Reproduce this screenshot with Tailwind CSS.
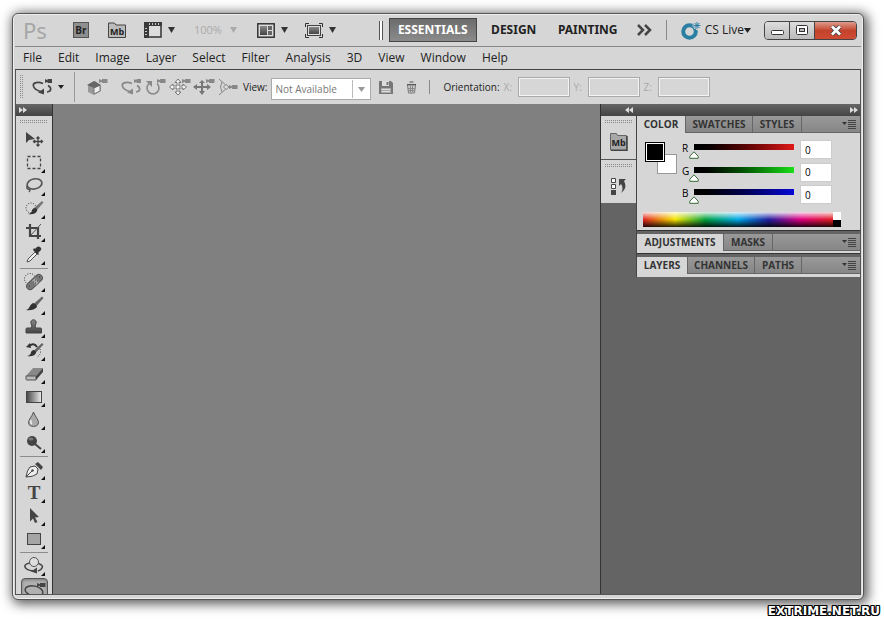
<!DOCTYPE html>
<html lang="en">
<head>
    <meta charset="UTF-8">
    <meta name="viewport" content="width=device-width, initial-scale=1.0">
    <title>Photoshop</title>
    <script src="https://cdn.jsdelivr.net/npm/@tailwindcss/browser@4"></script>
    <style>
        body {
            font-family: 'Open Sans', 'Noto Sans', sans-serif;
        }

        .grip {
            background-image: conic-gradient(at 1px 1px, transparent 75%, #8a8a8a 0);
            background-size: 2px 2px;
        }

        .channel {
            appearance: none;
            background-repeat: no-repeat;
            background-size: 100px 6px;
            background-position: 5px 0;
        }

        .channel::-webkit-slider-thumb {
            appearance: none;
            width: 10px;
            height: 8px;
            margin-top: 6px;
            background: url("data:image/svg+xml,%3Csvg xmlns='http://www.w3.org/2000/svg' width='10' height='8'%3E%3Cpath d='M5 .8L9.2 5.2V7.3H.8V5.2z' fill='%23fff' stroke='%23386b38'/%3E%3C/svg%3E");
        }

        .outlined {
            text-shadow: 1px 0 #000, -1px 0 #000, 0 1px #000, 0 -1px #000, 1px 1px #000, -1px -1px #000, 1px -1px #000, -1px 1px #000;
        }
    </style>
</head>
<body class="h-screen flex flex-col overflow-hidden bg-white pl-3 pr-5 pt-[13px]">
    <!-- Shared shapes -->
    <svg class="absolute size-0">
        <defs>
            <linearGradient id="shade" x1="0" y1="0" x2="0" y2="1"><stop stop-color="#888"/><stop offset="1" stop-color="#444"/></linearGradient>
            <linearGradient id="fade"><stop stop-color="#444"/><stop offset="1" stop-color="#eee"/></linearGradient>
            <symbol id="corner" viewBox="0 0 36 23"><path d="M29 18v4h-4z" fill="#111"/></symbol>
            <symbol id="cam" viewBox="0 0 9 6"><path d="M0 1l3 1.300V1h5.500v4H3V3.700L0 5z" fill="currentColor"/></symbol>
            <symbol id="orbit" viewBox="0 0 22 18">
                <path d="M11 5.500C6 3.500 1 4.500 1.300 7.500c.4 3 4 5.200 8.200 6.300M16 7.500c3.500 2 4 6-1 6.500" fill="none" stroke="currentColor" stroke-width="1.700"/>
                <path d="M12 10.500v6L6 14.500z" fill="currentColor"/>
                <path d="M13 1l2.500 1.200V1H20v4h-4.500V3.800L13 5z" fill="currentColor"/>
            </symbol>
            <symbol id="down" viewBox="0 0 7 6"><path d="M0 0h7L3.500 6z" fill="currentColor"/></symbol>
            <symbol id="panelmenu" viewBox="0 0 14 9"><path d="M0 2h5L2.500 5z" fill="#333"/><path d="M6 .5h8M6 2.500h8M6 4.500h8M6 6.500h8M6 8.500h8" stroke="#444"/></symbol>
            <symbol id="chev" viewBox="0 0 8 6"><path d="M0 0l4 3-4 3zM4 0l4 3-4 3z" fill="#ddd"/></symbol>
        </defs>
    </svg>

    <div class="flex-1 min-h-0 flex flex-col rounded-md border border-[#555] bg-[#d6d6d6] px-[2px] pb-1 shadow-[2px_2px_12px_2px_rgba(0,0,0,0.65),inset_0_0_0_1px_#eee]">
        <!-- Application bar -->
        <header class="h-[33px] shrink-0 flex items-center border-b border-[#8a8a8a] pl-2 pr-1 text-[#333]">
            <h1 class="w-[50px] text-[22px] leading-8 text-[#a6a6a6] font-['Noto_Sans']">Ps</h1>
            <button class="w-[35px]" aria-label="Launch Bridge">
                <svg width="16" height="16"><rect x=".5" y=".5" width="15" height="15" fill="#8e8e8e" stroke="#555"/><text x="8" y="12" font-size="10" font-weight="700" text-anchor="middle" fill="#222">Br</text></svg>
            </button>
            <button class="w-9" aria-label="Launch Mini Bridge">
                <svg width="18" height="16"><path d="M.5 15.500V1h6l1.500 2h9.500v12.500z" fill="#bbb" stroke="#444"/><text x="9" y="13" font-size="9" font-weight="700" text-anchor="middle" fill="#222">Mb</text></svg>
            </button>
            <button class="w-[50px] flex items-center gap-[6px]" aria-label="View extras">
                <svg width="18" height="16"><path d="M1 1h16v14H1z" fill="#ddd" stroke="#333" stroke-width="1.500"/><path d="M0 0h18v4H5v12H0z" fill="#3a3a3a"/><path d="M5.500 1v2M8.500 1v2M11.500 1v2M14.500 1v2M1 6.500h2M1 9.500h2M1 12.500h2" stroke="#ccc"/></svg>
                <svg width="7" height="6"><use href="#down"/></svg>
            </button>
            <button class="w-[63px] flex items-center gap-2 text-[11px] text-[#aaa]" aria-label="Zoom level">100% <svg width="7" height="6"><use href="#down"/></svg></button>
            <button class="w-12 flex items-center gap-[6px]" aria-label="Arrange documents">
                <svg width="18" height="15"><rect x=".8" y=".8" width="16.400" height="13.400" fill="#ddd" stroke="#333" stroke-width="1.500"/><path d="M3 3h7v9H3z" fill="url(#shade)"/><path d="M11 3h4v4h-4zM11 8h4v4h-4z" fill="#666"/></svg>
                <svg width="7" height="6"><use href="#down"/></svg>
            </button>
            <button class="flex items-center gap-[6px]" aria-label="Screen mode">
                <svg width="18" height="15"><path d="M.5 4V.5H4M14 .5h3.500V4M17.500 11v3.500H14M4 14.500H.5V11" fill="none" stroke="#333"/><rect x="2.500" y="2.500" width="13" height="10" fill="#ddd" stroke="#444"/><rect x="4" y="4" width="10" height="7" fill="url(#shade)"/></svg>
                <svg width="7" height="6"><use href="#down"/></svg>
            </button>
            <nav class="ml-auto flex items-center text-xs font-bold text-[#222] font-['Noto_Sans']">
                <span class="h-[19px] w-1 mr-[6px] border-x border-[#555] bg-white"></span>
                <button class="h-6 w-[88px] border border-[#444] bg-linear-to-b from-[#6c6c6c] to-[#8b8b8b] text-white">ESSENTIALS</button>
                <button class="w-[74px]">DESIGN</button>
                <button class="w-[74px]">PAINTING</button>
                <button class="ml-3" aria-label="More workspaces"><svg width="15" height="12"><path d="M1 1l5 5-5 5M8 1l5 5-5 5" fill="none" stroke="#444" stroke-width="2.500"/></svg></button>
            </nav>
            <button class="ml-[14px] flex h-5 items-center border-l border-[#888] pl-[14px] text-xs text-[#222]">
                <svg class="mr-1" width="20" height="19"><circle cx="8.500" cy="10.500" r="6.300" fill="none" stroke="#2a7fa3" stroke-width="4"/><path d="M16 0v9M11.500 4.500h9M13 1.500l6 6M19 1.500l-6 6" stroke="#d6d6d6" stroke-width="2"/><path d="M16 1v7M12.500 4.500h7M13.500 2l5 5M18.500 2l-5 5" stroke="#2a7fa3"/></svg>
                CS Live
                <svg width="7" height="5" viewBox="0 0 7 6" preserveAspectRatio="none"><use href="#down"/></svg>
            </button>
            <div class="ml-[13px] flex h-[19px] w-[93px] overflow-hidden rounded-sm border border-[#444]">
                <button class="flex w-[25px] items-end justify-center border-r border-[#444] bg-linear-to-b from-[#ddd] via-[#ccc] to-[#bbb] pb-1" aria-label="Minimize"><svg width="13" height="5"><rect x=".5" y=".5" width="12" height="4" rx="1" fill="#fff" stroke="#333"/></svg></button>
                <button class="flex w-[25px] items-center justify-center border-r border-[#444] bg-linear-to-b from-[#ddd] via-[#ccc] to-[#bbb]" aria-label="Maximize"><svg width="12" height="10"><rect x=".5" y=".5" width="11" height="9" rx="1" fill="#fff" stroke="#333"/><rect x="3.500" y="3.500" width="5" height="3" fill="#bbb" stroke="#333"/></svg></button>
                <button class="flex flex-1 items-center justify-center bg-linear-to-b from-[#dc9a8c] via-[#c4432d] to-[#cf4a33]" aria-label="Close"><svg width="12" height="11"><path d="M2 1.500l8 8M10 1.500l-8 8" stroke="#444" stroke-width="4.500"/><path d="M2 1.500l8 8M10 1.500l-8 8" stroke="#fff" stroke-width="2.800"/></svg></button>
            </div>
        </header>

        <!-- Menu bar -->
        <nav class="h-[23px] shrink-0 flex items-center gap-4 border-b border-[#444] pl-2 text-xs text-[#222]">
            <button>File</button>
            <button>Edit</button>
            <button>Image</button>
            <button>Layer</button>
            <button>Select</button>
            <button>Filter</button>
            <button>Analysis</button>
            <button>3D</button>
            <button>View</button>
            <button>Window</button>
            <button>Help</button>
        </nav>

        <!-- Options bar -->
        <div class="h-[34px] shrink-0 flex items-center border-x border-[#555] pl-1 text-[10px] text-[#222]">
            <span class="grip h-6 w-1"></span>
            <button class="ml-2 flex items-center gap-1" aria-label="Current tool">
                <svg class="text-[#444]" width="22" height="18"><use href="#orbit"/></svg>
                <svg width="6" height="4" viewBox="0 0 7 6" preserveAspectRatio="none"><use href="#down"/></svg>
            </button>
            <span class="ml-[10px] h-[30px] w-px bg-[#999]"></span>
            <div class="ml-3 flex items-center gap-[2px] text-[#888]">
                <button class="w-8" aria-label="Initial position"><svg width="22" height="18"><path d="M1 7l7-4 6 5v5l-7 4-6-3z" fill="#999"/><path d="M7 10l6-3v6l-6 3z" fill="#eee" stroke="#777"/><path d="M0 7l7-4 7 4-2 1-5 2z" fill="#666"/><use href="#cam" x="12" y="0" width="9" height="6"/></svg></button>
                <button aria-label="Orbit"><svg width="22" height="18"><use href="#orbit"/></svg></button>
                <button aria-label="Roll"><svg width="22" height="18"><path d="M4 5.500a6 6 0 1 0 8 0" fill="none" stroke="#888" stroke-width="1.600"/><path d="M1 3h6v6z" fill="#888"/><use href="#cam" x="12" y="0" width="9" height="6"/></svg></button>
                <button aria-label="Pan"><svg width="22" height="18"><path d="M9 1l3 3.500h-2V8h4V6l3.500 3L14 12v-2h-4v4h2l-3 3-3-3h2v-4H4v2L.5 9 4 6v2h4V4.500H6z" fill="#f4f4f4" stroke="#777"/><use href="#cam" x="13" y="0" width="9" height="6"/></svg></button>
                <button aria-label="Walk"><svg width="22" height="18"><path d="M9 2l3 3h-2v3h4V6l4 3-4 3v-2h-4v3h2l-3 4-3-4h2v-3H4v2L0 9l4-3v2h4V5H6z" fill="#777"/><use href="#cam" x="13" y="0" width="9" height="6"/></svg></button>
                <button aria-label="Zoom"><svg width="22" height="18"><path d="M2 1l9 8-9 8M5 4q-3 5 0 10" fill="none" stroke="#888"/><path d="M9 6.500l3 2.500-3 2.500L6.500 9z" fill="#ddd" stroke="#888"/><use href="#cam" x="12" y="6" width="9" height="6"/></svg></button>
            </div>
            <label for="view" class="ml-1">View:</label>
            <div class="relative ml-1 mt-1">
                <select id="view" class="h-[22px] w-[100px] appearance-none border border-[#aaa] bg-white pl-[3px] text-[10px] text-[#777]">
                    <option>Not Available</option>
                </select>
                <span class="pointer-events-none absolute right-[2px] top-[2px] flex h-[18px] w-[17px] items-center justify-center border-l border-[#bbb] bg-white text-[#999]"><svg width="7" height="5" viewBox="0 0 7 6" preserveAspectRatio="none"><use href="#down"/></svg></span>
            </div>
            <button class="ml-2" aria-label="Save view"><svg width="14" height="14"><path d="M0 1h12l2 2v11H0z" fill="#777"/><path d="M3 1h7v5H3z" fill="#ddd"/><path d="M7.500 2h2v3h-2z" fill="#777"/><path d="M2 8h10v5H2z" fill="#aaa"/><path d="M3 9.500h8M3 11.500h8" stroke="#ddd"/></svg></button>
            <button class="ml-3" aria-label="Delete view"><svg width="13" height="14"><path d="M2.500 5h8l-1 8h-6z" fill="#ccc" stroke="#777"/><path d="M2 4.500h9M4.500 2h4" stroke="#555" stroke-width="1.200"/><path d="M5.500 6v6M7.500 6v6M3 8.500h7M3.500 10.500h6" stroke="#888"/></svg></button>
            <span class="ml-[11px] h-[14px] w-px bg-[#888]"></span>
            <span class="ml-[13px] mr-1">Orientation:</span>
            <label for="rot-x" class="w-[14px] text-[#aaa]">X:</label>
            <input id="rot-x" class="mr-1 h-5 w-[52px] border border-[#aaa] shadow-[inset_0_0_0_1px_#f4f4f4]" disabled>
            <label for="rot-y" class="w-[14px] text-[#aaa]">Y:</label>
            <input id="rot-y" class="mr-1 h-5 w-[52px] border border-[#aaa] shadow-[inset_0_0_0_1px_#f4f4f4]" disabled>
            <label for="rot-z" class="w-[14px] text-[#aaa]">Z:</label>
            <input id="rot-z" class="h-5 w-[52px] border border-[#aaa] shadow-[inset_0_0_0_1px_#f4f4f4]" disabled>
        </div>

        <!-- Workspace -->
        <div class="flex-1 min-h-0 flex overflow-hidden border-x border-b border-[#555] bg-[#808080]">
            <!-- Tools -->
            <aside class="w-9 shrink-0 flex flex-col border-r border-[#333] bg-[#d6d6d6] text-[#444] box-content">
                <div class="h-3 shrink-0 bg-linear-to-b from-[#666] to-[#444] pl-[3px] pt-[3px]"><svg width="8" height="6"><use href="#chev"/></svg></div>
                <div class="grip mx-auto mt-1 mb-1 h-1 w-7 shrink-0"></div>
                <button class="h-[23px] shrink-0" aria-label="Move tool"><svg width="36" height="23"><path d="M10 4l9 7-6 1-3 3z" fill="#444"/><path d="M22 9v9M17.500 13.500h9M20.500 10.500L22 9l1.500 1.500M20.500 16.500L22 18l1.500-1.500M19 12l-1.500 1.500L19 15M25 12l1.500 1.500L25 15" fill="none" stroke="#444" stroke-width="1.300"/></svg></button>
                <button class="h-[23px] shrink-0" aria-label="Marquee tool"><svg width="36" height="23"><rect x="11.500" y="5.500" width="13" height="12" fill="none" stroke="#444" stroke-width="1.300" stroke-dasharray="3 2"/><use href="#corner"/></svg></button>
                <button class="h-[23px] shrink-0" aria-label="Lasso tool"><svg width="36" height="23"><ellipse cx="18.500" cy="10" rx="7.500" ry="5" fill="none" stroke="#555" stroke-width="1.700" transform="rotate(-12 18 10)"/><path d="M11 12q-1 4 3 3M13 14q2 2 0 4" fill="none" stroke="#555" stroke-width="1.400"/><use href="#corner"/></svg></button>
                <button class="h-[23px] shrink-0" aria-label="Quick selection tool"><svg width="36" height="23"><circle cx="15" cy="11" r="5" fill="none" stroke="#333" stroke-dasharray="1 1.500"/><path d="M26 4l1.500 1.500-6.500 7.500-3-2z" fill="#777"/><path d="M19 11q3 1 2 3-2 4-9 3 4-1 4-4 1-2 3-2z" fill="#333"/><use href="#corner"/></svg></button>
                <button class="h-[23px] shrink-0" aria-label="Crop tool"><svg width="36" height="23"><path d="M14 4v12h11M10 8h12v11" fill="none" stroke="#444" stroke-width="2.200"/><path d="M15 15L25 4" stroke="#555"/><use href="#corner"/></svg></button>
                <button class="h-[23px] shrink-0" aria-label="Eyedropper tool"><svg width="36" height="23"><path d="M11 19l1-3 7-7 2 2-7 7z" fill="#eee" stroke="#555"/><path d="M17 7l5 5 1-1-1-1 3-3q1-2-1-3t-3 0l-2 2-1-1z" fill="#333"/><use href="#corner"/></svg></button>
                <hr class="mx-1 mt-[2px] mb-px h-px shrink-0 border-0 bg-[#8c8c8c]">
                <button class="h-[23px] shrink-0" aria-label="Healing brush tool"><svg width="36" height="23"><circle cx="14" cy="9" r="5.500" fill="none" stroke="#333" stroke-dasharray="1 1.500"/><rect x="9" y="8.500" width="19" height="7" rx="3.500" fill="#777" stroke="#555" transform="rotate(-43 18.500 12)"/><path d="M16 11l3-3 4 4-3 3z" fill="#aaa"/><path d="M17 12h1M19 10h1M19 13h1M21 11h1M13 16h1M23 7h1" stroke="#333"/><use href="#corner"/></svg></button>
                <button class="h-[23px] shrink-0" aria-label="Brush tool"><svg width="36" height="23"><path d="M26 3.500l1.500 1.500-7 8-3-2z" fill="#666"/><path d="M17 10q4 1 4 4-4 4-11 3 3-1 4-4 1-2 3-3z" fill="#333"/><use href="#corner"/></svg></button>
                <button class="h-[23px] shrink-0" aria-label="Clone stamp tool"><svg width="36" height="23"><path d="M15.500 12q1-2-.5-4.500A2.700 2.700 0 1 1 20 7.500q-1.500 2.500-.5 4.500h5q1 0 1 1v4H10v-4q0-1 1-1z" fill="url(#shade)" stroke="#444"/><use href="#corner"/></svg></button>
                <button class="h-[23px] shrink-0" aria-label="History brush tool"><svg width="36" height="23"><path d="M13 7q5-4 8 1" fill="none" stroke="#333" stroke-width="2"/><path d="M10 8l4-4 1 5z" fill="#333"/><path d="M26 4l1.500 1.500-7 7.500-2-2z" fill="#666"/><path d="M18 11q3 1 2 3-2 4-9 3 4-1 4-4 1-2 3-2z" fill="#333"/><path d="M24 10q2 5-3 8" fill="none" stroke="#333" stroke-dasharray="1 1.500"/><use href="#corner"/></svg></button>
                <button class="h-[23px] shrink-0" aria-label="Eraser tool"><svg width="36" height="23"><path d="M10 14l7-8h10l-7 8z" fill="#888"/><path d="M10 14h10v4h-9q-1 0-1-1z" fill="#bbb" stroke="#555"/><path d="M20 14l7-8v4l-7 8z" fill="#444"/><use href="#corner"/></svg></button>
                <button class="h-[23px] shrink-0" aria-label="Gradient tool"><svg width="36" height="23"><rect x="10.500" y="6.500" width="15" height="11" fill="url(#fade)" stroke="#444"/><use href="#corner"/></svg></button>
                <button class="h-[23px] shrink-0" aria-label="Blur tool"><svg width="36" height="23"><path d="M17.500 4q1 3 3.500 6.500t1 6q-1.500 2-4.500 2t-4.500-2q-1.500-2.500 1-6T17.500 4z" fill="#aaa" stroke="#555"/><path d="M15 12q-1 3 1 4" fill="none" stroke="#eee" stroke-width="1.500"/><use href="#corner"/></svg></button>
                <button class="h-[23px] shrink-0" aria-label="Burn tool"><svg width="36" height="23"><circle cx="16" cy="10" r="5" fill="#444"/><path d="M19 13l6 5" stroke="#444" stroke-width="2"/><ellipse cx="15" cy="8" rx="2.500" ry="1.500" fill="#777"/><use href="#corner"/></svg></button>
                <hr class="mx-1 mt-[2px] mb-px h-px shrink-0 border-0 bg-[#8c8c8c]">
                <button class="h-[23px] shrink-0" aria-label="Pen tool"><svg width="36" height="23"><path d="M10 19q1-7 4-10l5-1 3 3-1 5q-4 3-11 3z" fill="#eee" stroke="#444"/><path d="M10 19l6-6" stroke="#444"/><circle cx="16.500" cy="12.500" r="1.200" fill="#444"/><path d="M19 6l3-2 5 5-2 3z" fill="#444"/><use href="#corner"/></svg></button>
                <button class="h-[23px] shrink-0" aria-label="Type tool"><svg width="36" height="23"><text x="18" y="18" text-anchor="middle" font-family="Liberation Serif, serif" font-weight="700" font-size="19" fill="#444">T</text><use href="#corner"/></svg></button>
                <button class="h-[23px] shrink-0" aria-label="Path selection tool"><svg width="36" height="23"><path d="M14 4l9 9-4 .5 2.500 4.500-2.500 1-2-4.500-3 3z" fill="#444"/><use href="#corner"/></svg></button>
                <button class="h-[23px] shrink-0" aria-label="Rectangle tool"><svg width="36" height="23"><rect x="11.500" y="6.500" width="13" height="11" fill="#a5a5a5" stroke="#444"/><use href="#corner"/></svg></button>
                <hr class="mx-1 mt-[2px] mb-px h-px shrink-0 border-0 bg-[#8c8c8c]">
                <button class="h-[23px] shrink-0" aria-label="3D rotate tool"><svg width="36" height="23"><path d="M14 9q-6 1-5 4t8 4M21 9q7 2 5 5-1 2-4 3" fill="none" stroke="#444" stroke-width="1.600"/><circle cx="18" cy="8" r="4.500" fill="#ddd" stroke="#555"/><path d="M21 13.500v6l-6-2z" fill="#444"/><use href="#corner"/></svg></button>
                <button class="mx-auto mt-px h-[23px] w-[27px] shrink-0 rounded-sm border border-[#555] bg-[#b0b0b0] shadow-[inset_0_1px_3px_#777]" aria-label="3D camera tool"><svg width="25" height="21"><ellipse cx="12" cy="12" rx="9" ry="5" fill="none" stroke="#444" stroke-width="1.500" transform="rotate(12 12 12)"/><use href="#cam" x="15" y="3" width="9" height="6"/></svg></button>
            </aside>

            <!-- Canvas -->
            <main class="flex-1"></main>

            <!-- Docked panels -->
            <aside class="w-[260px] shrink-0 flex flex-col border-l border-[#333] bg-[#646464]">
                <div class="h-3 shrink-0 flex items-center bg-linear-to-b from-[#666] to-[#444] pl-6 pr-[2px]">
                    <svg class="rotate-180" width="8" height="6"><use href="#chev"/></svg>
                    <svg class="ml-auto" width="8" height="6"><use href="#chev"/></svg>
                </div>
                <div class="flex">
                    <div class="w-9 shrink-0 border-r border-[#444]">
                        <div class="h-[43px] bg-[#d6d6d6] pt-1 text-center">
                            <div class="grip mx-auto h-1 w-7"></div>
                            <button class="mt-2" aria-label="Mini Bridge"><svg width="18" height="19"><path d="M.5 18V1.500h6l1 2h9V18z" fill="#a8a8a8" stroke="#666"/><path d="M17 4v14.500H1" fill="none" stroke="#444" stroke-width="1.500"/><text x="8.500" y="14" font-size="9" font-weight="700" text-anchor="middle" fill="#222">Mb</text></svg></button>
                        </div>
                        <div class="h-[44px] border-t border-[#555] bg-[#d6d6d6] pt-1 text-center">
                            <div class="grip mx-auto h-1 w-7"></div>
                            <button class="mt-[9px]" aria-label="History"><svg width="16" height="18"><path d="M.5 1.500h4v4h-4zM.5 7.500h4v4h-4z" fill="#fff" stroke="#444"/><path d="M0 13h5v5H0z" fill="#444"/><path d="M8 2h7L13 4q4 7-3 12 3-5 0-9L8 9z" fill="#444"/></svg></button>
                        </div>
                    </div>
                    <div class="flex-1 min-w-0 flex flex-col gap-[3px]">
                        <section class="border-b border-[#333] bg-[#d6d6d6]">
                            <div class="h-[17px] flex bg-linear-to-b from-[#999] to-[#858585] text-[10px] font-bold leading-4 text-[#333]">
                                <button class="w-12 border-b border-[#d6d6d6] bg-[#d6d6d6]">COLOR</button>
                                <button class="w-[68px] border-x border-b border-[#666]">SWATCHES</button>
                                <button class="w-[49px] border-r border-b border-[#666]">STYLES</button>
                                <button class="flex flex-1 items-center justify-end border-b border-[#666] pr-1" aria-label="Color panel menu"><svg width="14" height="9"><use href="#panelmenu"/></svg></button>
                            </div>
                            <div class="flex h-[75px] pl-2 pt-[7px]">
                                <svg class="mt-[2px] mr-1" width="33" height="33"><rect x="12.500" y="12.500" width="19" height="19" fill="#fff" stroke="#999"/><rect x=".5" y=".5" width="19" height="19" fill="#fff" stroke="#000"/><rect x="2" y="2" width="16" height="16"/></svg>
                                <div class="flex flex-col text-[10px] text-black">
                                    <div class="flex h-[23px] items-start">
                                        <label for="red" class="w-[7px] leading-4">R</label>
                                        <input id="red" type="range" min="0" max="255" value="0" class="channel mt-1 h-4 w-[110px] bg-linear-to-r from-black to-[#e01818]">
                                        <input aria-label="Red value" value="0" class="ml-px h-[19px] w-8 border border-[#ccc] bg-white pl-1">
                                    </div>
                                    <div class="flex h-[23px] items-start">
                                        <label for="green" class="w-[7px] leading-4">G</label>
                                        <input id="green" type="range" min="0" max="255" value="0" class="channel mt-1 h-4 w-[110px] bg-linear-to-r from-black to-[#18e018]">
                                        <input aria-label="Green value" value="0" class="ml-px h-[19px] w-8 border border-[#ccc] bg-white pl-1">
                                    </div>
                                    <div class="flex h-[23px] items-start">
                                        <label for="blue" class="w-[7px] leading-4">B</label>
                                        <input id="blue" type="range" min="0" max="255" value="0" class="channel mt-1 h-4 w-[110px] bg-linear-to-r from-black to-[#0808d8]">
                                        <input aria-label="Blue value" value="0" class="ml-px h-[19px] w-8 border border-[#ccc] bg-white pl-1">
                                    </div>
                                </div>
                            </div>
                            <div class="ml-[6px] mt-1 mb-[3px] flex h-[15px] w-[198px]">
                                <div class="flex-1 bg-[linear-gradient(to_bottom,rgba(255,255,255,0.85),transparent_50%,rgba(0,0,0,0.85)),linear-gradient(to_right,#e02020,#f5e500_17%,#00a040_33%,#00a8e8_50%,#2020a0_66%,#e00080_83%,#e02020)]"></div>
                                <div class="w-2 bg-linear-to-b from-white from-50% to-black to-50%"></div>
                            </div>
                        </section>
                        <section class="border-b border-[#333] bg-[#d6d6d6] pb-[2px]">
                            <div class="h-[17px] flex bg-linear-to-b from-[#999] to-[#858585] text-[10px] font-bold leading-4 text-[#333]">
                                <button class="w-[86px] border-b border-[#d6d6d6] bg-[#d6d6d6]">ADJUSTMENTS</button>
                                <button class="w-[50px] border-x border-b border-[#666]">MASKS</button>
                                <button class="flex flex-1 items-center justify-end border-b border-[#666] pr-1" aria-label="Adjustments panel menu"><svg width="14" height="9"><use href="#panelmenu"/></svg></button>
                            </div>
                        </section>
                        <section class="bg-[#d6d6d6] pb-[3px]">
                            <div class="h-[17px] flex bg-linear-to-b from-[#999] to-[#858585] text-[10px] font-bold leading-4 text-[#333]">
                                <button class="w-[50px] border-b border-[#d6d6d6] bg-[#d6d6d6]">LAYERS</button>
                                <button class="w-[68px] border-x border-b border-[#666]">CHANNELS</button>
                                <button class="w-[47px] border-r border-b border-[#666]">PATHS</button>
                                <button class="flex flex-1 items-center justify-end border-b border-[#666] pr-1" aria-label="Layers panel menu"><svg width="14" height="9"><use href="#panelmenu"/></svg></button>
                            </div>
                        </section>
                    </div>
                </div>
            </aside>
        </div>
    </div>

    <footer class="outlined h-[21px] -mr-4 z-10 shrink-0 pt-[3px] text-right font-['DejaVu_Sans'] text-xs font-bold text-white">EXTRIME.NET.RU</footer>
</body>
</html>
